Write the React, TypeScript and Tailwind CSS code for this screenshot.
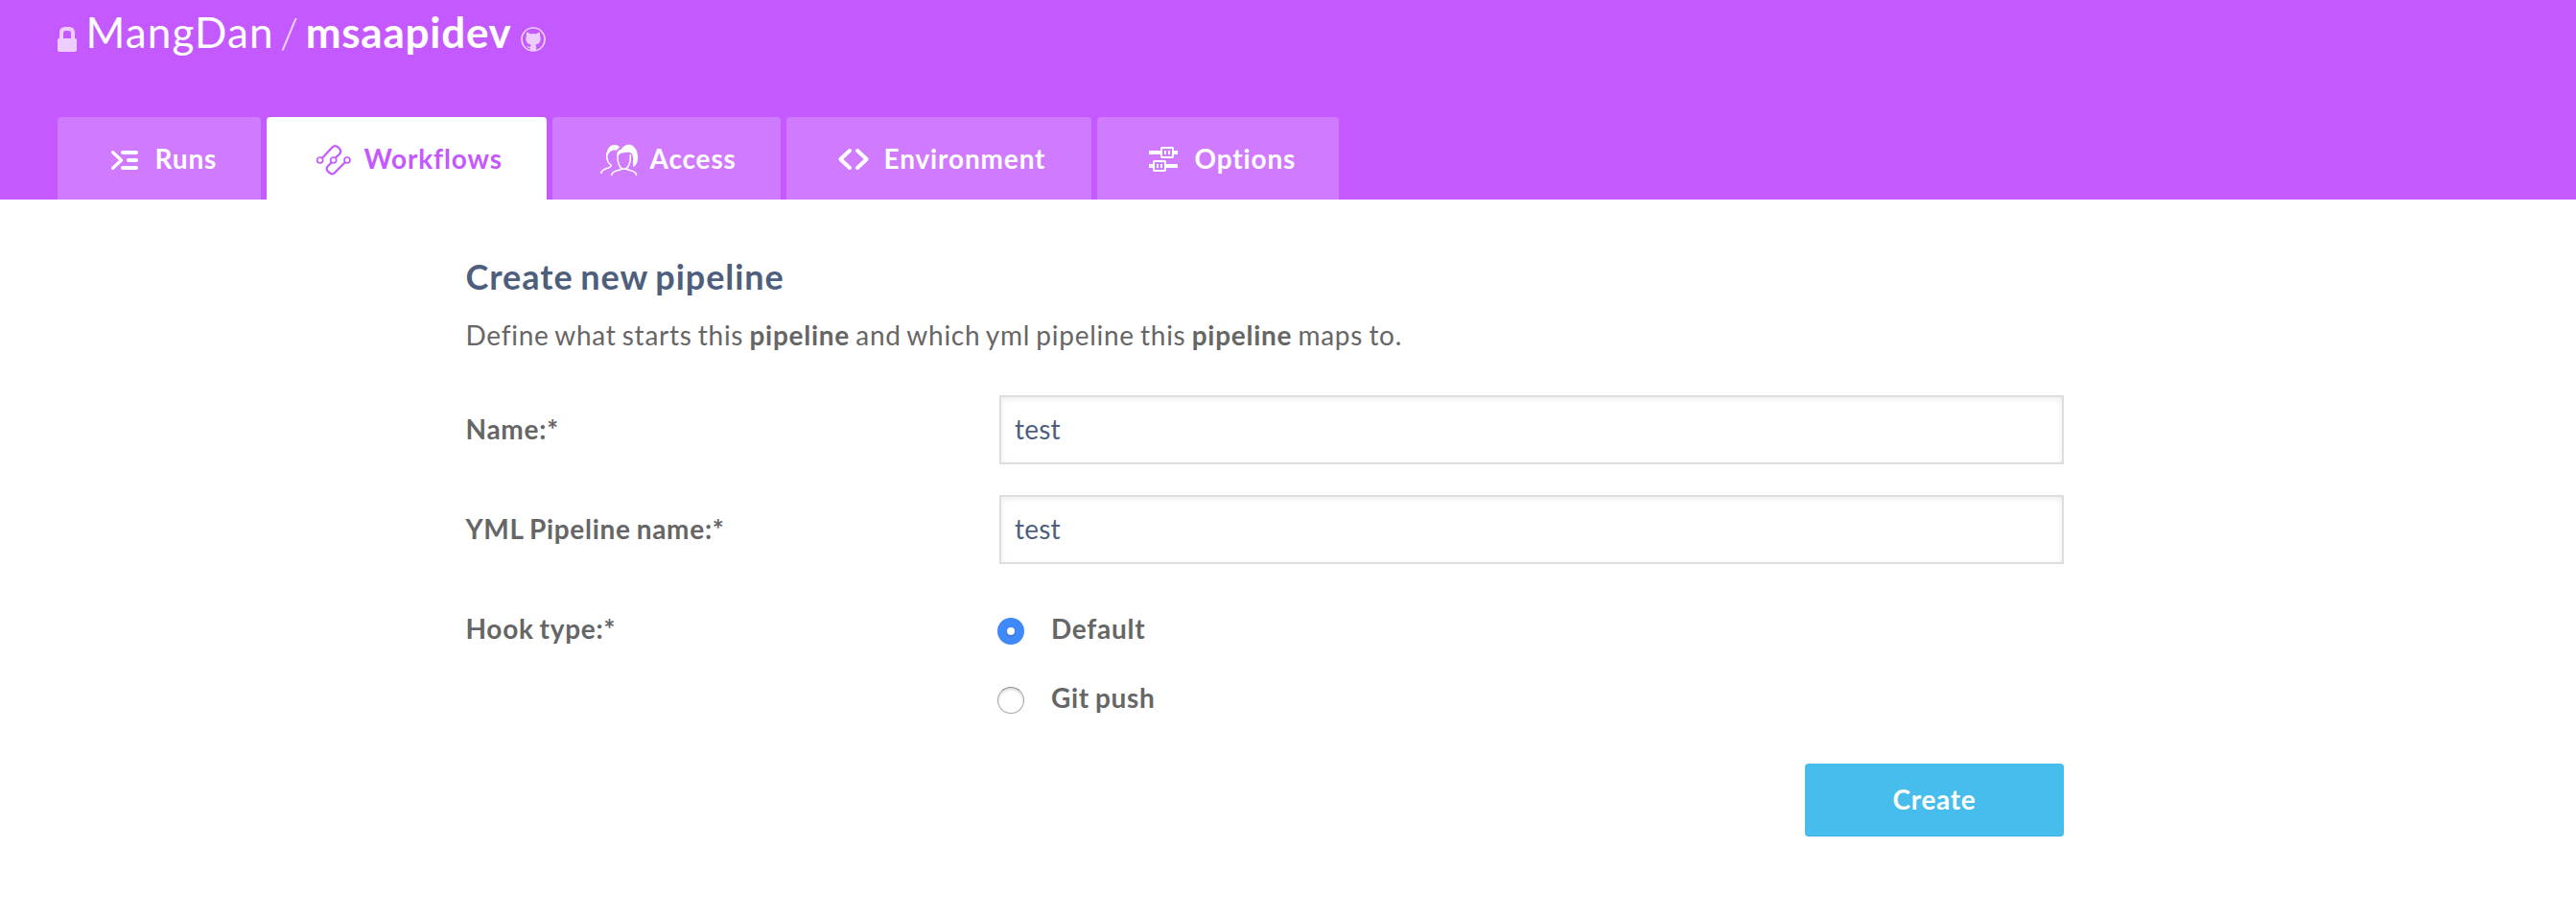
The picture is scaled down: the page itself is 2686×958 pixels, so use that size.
import type { ReactNode } from "react";

function RunsIcon() {
  return (
    <svg viewBox="30 24 120 120" className="size-10" fill="none" stroke="currentColor" strokeWidth="10" strokeLinecap="round" strokeLinejoin="round">
      <path d="M53 59L79.500 84L53 109" />
      <path d="M84 60H126M102 84H126M84 108H126" strokeWidth="12" />
    </svg>
  );
}

function WorkflowsIcon() {
  return (
    <svg viewBox="684 24 120 120" className="size-10" fill="none" stroke="currentColor" strokeWidth="6.500">
      <circle cx="701" cy="84" r="9" strokeWidth="5" />
      <circle cx="743" cy="84" r="9" strokeWidth="5" />
      <circle cx="786" cy="84" r="9" strokeWidth="5" />
      <path d="M708 77L739 44Q748 35 757 43L762 48Q770 56 761 66L750 76" />
      <path d="M736 92L726 102Q718 111 726 119L732 124Q740 131 748 122L779 91" />
    </svg>
  );
}

function AccessIcon() {
  return (
    <svg viewBox="168 114 120 120" className="size-10" fill="none" stroke="currentColor" strokeWidth="4.500" strokeLinecap="butt">
      <path d="M189 150C186 168 191 182 202 190C201 202 170 197 170 216" />
      <path d="M188 160C187 138 198 125 214 126C221 126 227 130 229 135C224 136 222 139 219 143C209 141 195 145 191 160Z" fill="currentColor" stroke="none" />
      <path d="M222 155C220 182 229 202 242 202C254 202 264 184 262 156" />
      <path d="M220 160C219 148 225 142 233 140C240 129 251 124 263 126C278 131 286 148 285 168C285 181 279 192 271 195C268 188 274 172 267 154C263 149 254 148 246 150C236 151 228 152 223 162Z" fill="currentColor" stroke="none" />
      <path d="M203 222C204 201 234 209 237 199M247 199C250 209 280 201 281 222" />
    </svg>
  );
}

function EnvironmentIcon() {
  return (
    <svg viewBox="900 114 120 120" className="size-10" fill="none" stroke="currentColor" strokeWidth="12" strokeLinecap="round" strokeLinejoin="round">
      <path d="M948 144L919 171L948 198M972 144L1001 171L972 198" />
    </svg>
  );
}

function OptionsIcon() {
  return (
    <svg viewBox="642 114 120 120" className="size-10" fill="none" stroke="currentColor" strokeWidth="6">
      <path d="M654 150H690M732 150H744M654 192H666M708 192H744" strokeWidth="12" />
      <rect x="693" y="135" width="36" height="30" rx="2" />
      <rect x="669" y="177" width="36" height="30" rx="2" />
      <path d="M705 144V156M717 144V156M681 186V198M693 186V198" />
    </svg>
  );
}

function LockIcon() {
  return (
    <svg viewBox="0 0 20 26" className="mt-7 h-[26px] w-5 shrink-0 opacity-70" fill="currentColor">
      <path d="M2 12V6Q2 0 8 0H12Q18 0 18 6V12H18.500Q20 12 20 13.500V24Q20 26 18 26H2Q0 26 0 24V13.500Q0 12 1.500 12ZM6 12H14V6.500Q14 4 11.500 4H8.500Q6 4 6 6.500Z" fillRule="evenodd" />
    </svg>
  );
}

function GithubIcon() {
  return (
    <svg viewBox="72 54 77 77" className="mt-7 size-[26px] shrink-0 opacity-70" fill="currentColor">
      <circle cx="110.500" cy="92.500" r="35.500" fill="none" stroke="currentColor" strokeWidth="5" />
      <path d="M90 71Q97 71 102 76Q110 74 119 76Q124 71 131 71Q133 77 131 82Q134 86 133 93Q132 107 117 109Q120 112 120 117V128H101V120Q94 121 91 114Q96 113 98 116Q101 118 102 114Q102 111 104 109Q89 107 88 93Q87 86 90 82Q88 77 90 71Z" />
    </svg>
  );
}

function Tab({ icon, label, width, active }: { icon: ReactNode; label: string; width: string; active?: boolean }) {
  return (
    <a
      className={`flex h-[86px] items-center gap-[11.5px] rounded-t-[4px] pl-[50px] text-[28px] font-bold tracking-[0.85px] ${width} ${
        active ? "bg-white text-[#c459ff]" : "bg-[#d07aff] text-white"
      }`}
    >
      <span className="mt-1 shrink-0">{icon}</span>
      <span className="whitespace-nowrap">{label}</span>
    </a>
  );
}

function Field({ label, value }: { label: string; value: string }) {
  return (
    <div className="mt-8 flex h-[72px] items-center">
      <label className="w-[556.5px] pb-0.5 font-bold">{label}</label>
      <input
        className="h-[72px] w-[1110px] border-2 border-[#dbdfe0] bg-white px-3.5 pb-0.5 text-[28px] tracking-[0.2px] text-[#4d5f7c] shadow-[inset_0_2px_6px_rgba(0,0,0,0.08)] outline-none"
        defaultValue={value}
      />
    </div>
  );
}

function Radio({ label, checked }: { label: string; checked?: boolean }) {
  return (
    <label className="flex h-[72px] items-center font-bold">
      {checked ? (
        <span className="mt-1 mr-7 flex size-7 items-center justify-center rounded-full bg-[#3f89fb]">
          <span className="size-2 rounded-full bg-white shadow-[0_1px_2px_rgba(0,0,0,0.25)]" />
        </span>
      ) : (
        <span className="mt-1 mr-7 size-7 rounded-full border border-[#a8a8a8] border-t-[#8e8e8e] bg-white shadow-[inset_0_2px_3px_rgba(0,0,0,0.15)]" />
      )}
      <span className="pb-0.5">{label}</span>
    </label>
  );
}

export default function App() {
  return (
    <div className="min-h-[958px] bg-white font-['Lato',sans-serif]">
      <header className="flex h-[208px] flex-col justify-between bg-[#c459ff] px-[60px]">
        <h1 className="flex h-[66px] items-start text-[44px] leading-[66px] whitespace-pre text-white">
          <LockIcon />
          <span className="ml-[9.5px] tracking-[1.1px]">MangDan</span>
          <span className="ml-[6.5px] font-light text-white/80">/</span>
          <span className="mr-[9px] ml-[7.5px] font-bold tracking-[0.750px]">msaapidev</span>
          <GithubIcon />
        </h1>
        <nav className="flex gap-1.5">
          <Tab icon={<RunsIcon />} label="Runs" width="w-[212px]" />
          <Tab icon={<WorkflowsIcon />} label="Workflows" width="w-[292px]" active />
          <Tab icon={<AccessIcon />} label="Access" width="w-[238px]" />
          <Tab icon={<EnvironmentIcon />} label="Environment" width="w-[318px]" />
          <Tab icon={<OptionsIcon />} label="Options" width="w-[252px]" />
        </nav>
      </header>
      <main className="ml-[485.5px] w-[1666.5px] text-[28px] tracking-[0.72px] text-[#666] [word-spacing:-1.6px]">
        <h2 className="pt-14 text-[36px] leading-[48px] font-bold tracking-[0.95px] text-[#4d5f7c] [word-spacing:-2px]">Create new pipeline</h2>
        <p className="mt-[17px] h-[51px] leading-10">
          Define what starts this <b>pipeline</b> and which yml pipeline this <b>pipeline</b> maps to.
        </p>
        <Field label="Name:*" value="test" />
        <Field label="YML Pipeline name:*" value="test" />
        <div className="mt-8 flex">
          <div className="flex h-[72px] w-[554.5px] items-center pb-0.5 font-bold">Hook type:*</div>
          <div>
            <Radio label="Default" checked />
            <Radio label="Git push" />
          </div>
        </div>
        <div className="mt-8 flex justify-end">
          <button className="h-[76px] w-[270px] rounded-[4px] border-b border-[#3fb0dd] bg-[#46bdec] pb-px font-bold text-white">Create</button>
        </div>
      </main>
    </div>
  );
}
